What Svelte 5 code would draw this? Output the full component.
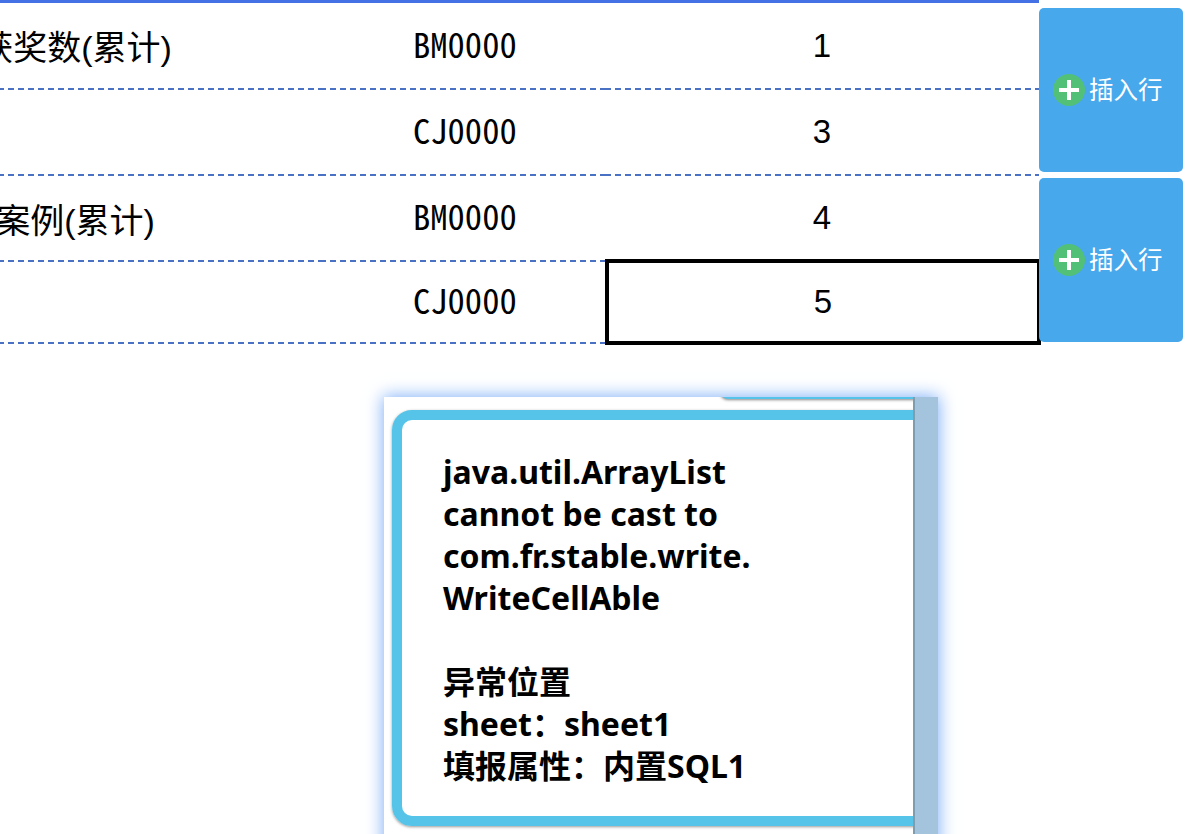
<script>
  const rows = [
    { label: '获奖数(累计)', code: 'BM0000', value: 1, height: 87 },
    { label: '', code: 'CJ0000', value: 3, height: 86 },
    { label: '案例(累计)', code: 'BM0000', value: 4, height: 86 },
    { label: '', code: 'CJ0000', value: 5, height: 82, selected: true }
  ]
  const lines = [
    'java.util.ArrayList',
    'cannot be cast to',
    'com.fr.stable.write.',
    'WriteCellAble',
    '',
    '异常位置',
    'sheet：sheet1',
    '填报属性：内置SQL1'
  ]
</script>

<div class="page">
  <div class="top">
    <div class="sheet">
      {#each rows as row}
        <div class="row" style="height: {row.height}px">
          <div class="cell label">{row.label}</div>
          <div class="cell code">{row.code}</div>
          <div class="cell value" class:selected={row.selected}>{row.value}</div>
        </div>
      {/each}
    </div>
    <div class="actions">
      {#each [0, 1] as i (i)}
        <button class="insert">
          <svg width="32" height="32" viewBox="0 0 32 32">
            <circle cx="16" cy="16" r="16" fill="#52c177" />
            <path d="M16 6v20M6 16h20" stroke="#fff" stroke-width="4" />
          </svg>
          <span>插入行</span>
        </button>
      {/each}
    </div>
  </div>

  <div class="dialog">
    <div class="content">
      <div class="peek"></div>
      <div class="message">
        {#each lines as line}
          <div class="line">{line}</div>
        {/each}
      </div>
    </div>
    <div class="scrollbar"></div>
  </div>
</div>

<style>
  :global(body) {
    margin: 0;
    background: #fff;
  }

  .page {
    width: 1196px;
    height: 834px;
    overflow: hidden;
    font-family: 'Liberation Sans', 'Noto Sans CJK SC', sans-serif;
  }

  .top {
    display: flex;
    height: 344px;
  }

  .sheet {
    flex: none;
    width: 1211px;
    margin-left: -172px;
    border-top: 3px solid #4472e4;
    box-sizing: border-box;
    height: 344px;
  }

  .row {
    display: grid;
    grid-template-columns: 492px 285px 434px;
  }

  .cell {
    display: flex;
    align-items: center;
    justify-content: center;
    box-sizing: border-box;
    padding-bottom: 2px;
    background: repeating-linear-gradient(90deg, #4a72c4 0 6px, transparent 6px 10px) bottom / 100% 2px no-repeat;
    color: #000;
    font-size: 33px;
  }

  .label {
    font-size: 34px;
    padding-left: 3px;
  }

  .code {
    font-family: 'Noto Sans CJK SC', sans-serif;
    font-feature-settings: 'hwid';
    font-size: 34.6px;
    justify-content: flex-start;
    padding-left: 93px;
    padding-bottom: 8px;
  }

  .selected {
    border: 4px solid #000;
    padding-bottom: 0;
    background: #fff;
    margin-top: -3px;
    margin-bottom: -1px;
    margin-right: -2px;
  }

  .actions {
    flex: none;
    width: 144px;
    padding-top: 8px;
    display: flex;
    flex-direction: column;
    gap: 6px;
    position: relative;
  }

  .insert {
    height: 164px;
    border: none;
    border-radius: 5px;
    background: #47a8ec;
    color: #fff;
    padding: 0 0 0 14px;
    display: flex;
    align-items: center;
    gap: 4px;
    font-family: 'Noto Sans CJK SC', sans-serif;
    font-size: 24.5px;
    line-height: 30px;
  }

  .insert span {
    margin-top: -3px;
  }

  .dialog {
    margin: 53px 0 0 384px;
    width: 554px;
    height: 460px;
    display: flex;
    background: #fff;
    box-shadow: 0 0 16px 1px #7fb0f8;
  }

  .content {
    position: relative;
    flex: none;
    width: 529px;
    overflow: hidden;
    padding: 13px 0 0 8px;
    box-sizing: border-box;
  }

  .peek {
    position: absolute;
    top: -14px;
    left: 336px;
    width: 300px;
    height: 16px;
    background: #56c4e8;
    border-radius: 8px;
    box-shadow: 0 1px 3px #888;
  }

  .message {
    width: 560px;
    height: 416px;
    box-sizing: border-box;
    border: 10px solid #56c4e8;
    border-radius: 20px;
    padding: 31px 0 0 41px;
    box-shadow: 0 1px 3px #999;
    font-family: 'Noto Sans', 'Noto Sans CJK SC', sans-serif;
    font-weight: 700;
    font-size: 32px;
    line-height: 42px;
    color: #000;
  }

  .line {
    height: 42px;
    white-space: nowrap;
  }

  .scrollbar {
    flex: none;
    width: 25px;
    box-sizing: border-box;
    background: #a3c4dc;
    border-left: 2px solid #7f9db0;
  }
</style>
